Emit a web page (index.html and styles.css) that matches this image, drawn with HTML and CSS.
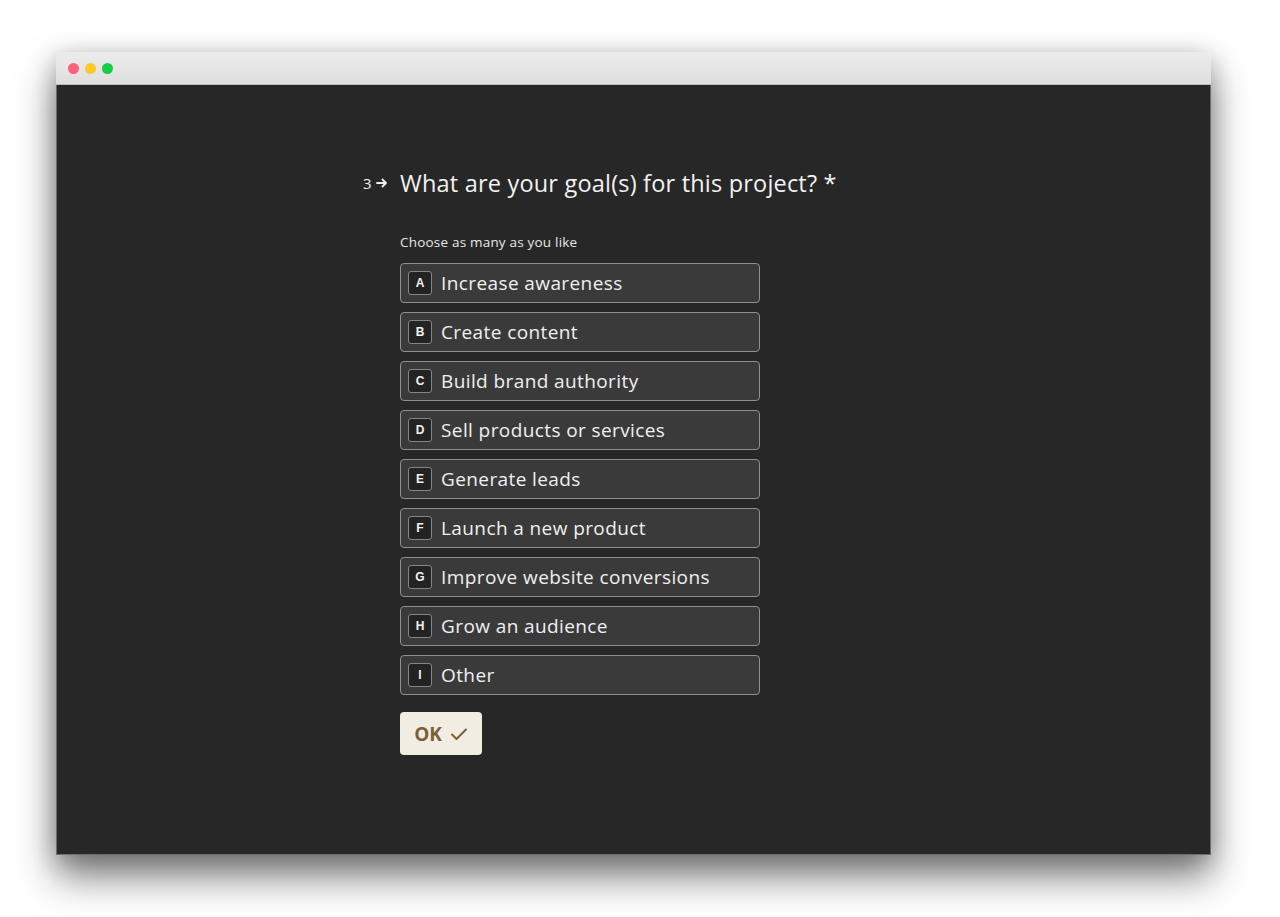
FILE: index.html
```html
<!DOCTYPE html>
<html>
<head>
<meta charset="utf-8">
<link rel="stylesheet" href="styles.css">
</head>
<body>
<div class="window">
  <div class="titlebar">
    <span class="dot red"></span><span class="dot yellow"></span><span class="dot green"></span>
  </div>
  <div class="content">
    <div class="form">
      <div class="question">
        <div class="qnum">3<svg class="arrow" width="12" height="10" viewBox="0 0 12 10"><path d="M1 5H10M6.5 1.5L10 5L6.5 8.5" fill="none" stroke="#f0f0f0" stroke-width="1.8" stroke-linecap="round" stroke-linejoin="round"/></svg></div>
        <h1 class="qtext">What are your goal(s) for this project? *</h1>
      </div>
      <div class="body">
        <p class="hint">Choose as many as you like</p>
        <div class="options">
          <div class="option"><span class="key">A</span><span class="label">Increase awareness</span></div>
          <div class="option"><span class="key">B</span><span class="label">Create content</span></div>
          <div class="option"><span class="key">C</span><span class="label">Build brand authority</span></div>
          <div class="option"><span class="key">D</span><span class="label">Sell products or services</span></div>
          <div class="option"><span class="key">E</span><span class="label">Generate leads</span></div>
          <div class="option"><span class="key">F</span><span class="label">Launch a new product</span></div>
          <div class="option"><span class="key">G</span><span class="label">Improve website conversions</span></div>
          <div class="option"><span class="key">H</span><span class="label">Grow an audience</span></div>
          <div class="option"><span class="key">I</span><span class="label">Other</span></div>
        </div>
        <button class="ok">OK<svg width="18" height="14" viewBox="0 0 18 14"><path d="M2 7.5L6.5 12L16 2.5" fill="none" stroke="#7a6031" stroke-width="2" stroke-linecap="round" stroke-linejoin="round"/></svg></button>
      </div>
    </div>
  </div>
</div>
</body>
</html>
```

FILE: styles.css
```css
html, body {
  margin: 0;
  padding: 0;
  background: #ffffff;
}
body {
  padding: 52px 0 0 56px;
  height: 917px;
  box-sizing: border-box;
  overflow: hidden;
  font-family: "Open Sans", "Noto Sans", sans-serif;
}
.window {
  width: 1155px;
  height: 803px;
  display: flex;
  flex-direction: column;
  border-radius: 5px 5px 0 0;
  box-shadow: 0 22px 38px rgba(0,0,0,0.5), 0 4px 24px rgba(0,0,0,0.22);
  overflow: hidden;
}
.titlebar {
  background: linear-gradient(#ececec, #dfdfdf);
  border-bottom: 1px solid #bdbdbd;
  display: flex;
  align-items: center;
  padding-left: 12px;
  gap: 6px;
  box-sizing: border-box;
  height: 33px;
}
.dot {
  width: 11px;
  height: 11px;
  border-radius: 50%;
}
.red { background: #fe6077; }
.yellow { background: #fdc928; }
.green { background: #15cf42; }
.content {
  flex: 1;
  background: #272727;
  border: 1px solid #6d6d6d;
  border-top: none;
  display: flex;
  padding-left: 306px;
}
.form {
  margin-top: 82px;
}
.question {
  display: flex;
  align-items: baseline;
}
.qnum {
  width: 37px;
  color: #f0f0f0;
  font-size: 15px;
  display: flex;
  align-items: center;
  gap: 4px;
  position: relative;
  top: -3px;
}
.qtext {
  margin: 0;
  font-weight: 400;
  font-size: 23.5px;
  letter-spacing: 0.2px;
  color: #f2f2f2;
}
.body {
  padding-left: 37px;
}
.hint {
  margin: 34px 0 12px;
  font-size: 13.5px;
  letter-spacing: 0.2px;
  color: #e8e8e8;
}
.options {
  display: flex;
  flex-direction: column;
  gap: 9px;
}
.option {
  width: 360px;
  height: 40px;
  box-sizing: border-box;
  background: #3a3a3a;
  border: 1px solid #8f8f8f;
  border-radius: 4px;
  display: flex;
  align-items: center;
  padding-left: 7px;
  gap: 9px;
}
.key {
  width: 24px;
  height: 24px;
  box-sizing: border-box;
  background: #232323;
  border: 1px solid #858585;
  border-radius: 3px;
  display: flex;
  align-items: center;
  justify-content: center;
  color: #f2f2f2;
  font-family: "Liberation Sans", Arial, sans-serif;
  font-weight: 700;
  font-size: 12px;
}
.label {
  color: #f0f0f0;
  font-size: 19px;
  letter-spacing: 0.4px;
}
.ok {
  margin-top: 17px;
  width: 82px;
  height: 43px;
  background: #f2ede3;
  border: none;
  border-radius: 4px;
  color: #7a6031;
  font-family: "Open Sans", sans-serif;
  font-weight: 700;
  font-size: 19px;
  display: flex;
  align-items: center;
  justify-content: center;
  gap: 8px;
  padding: 0;
}
```
